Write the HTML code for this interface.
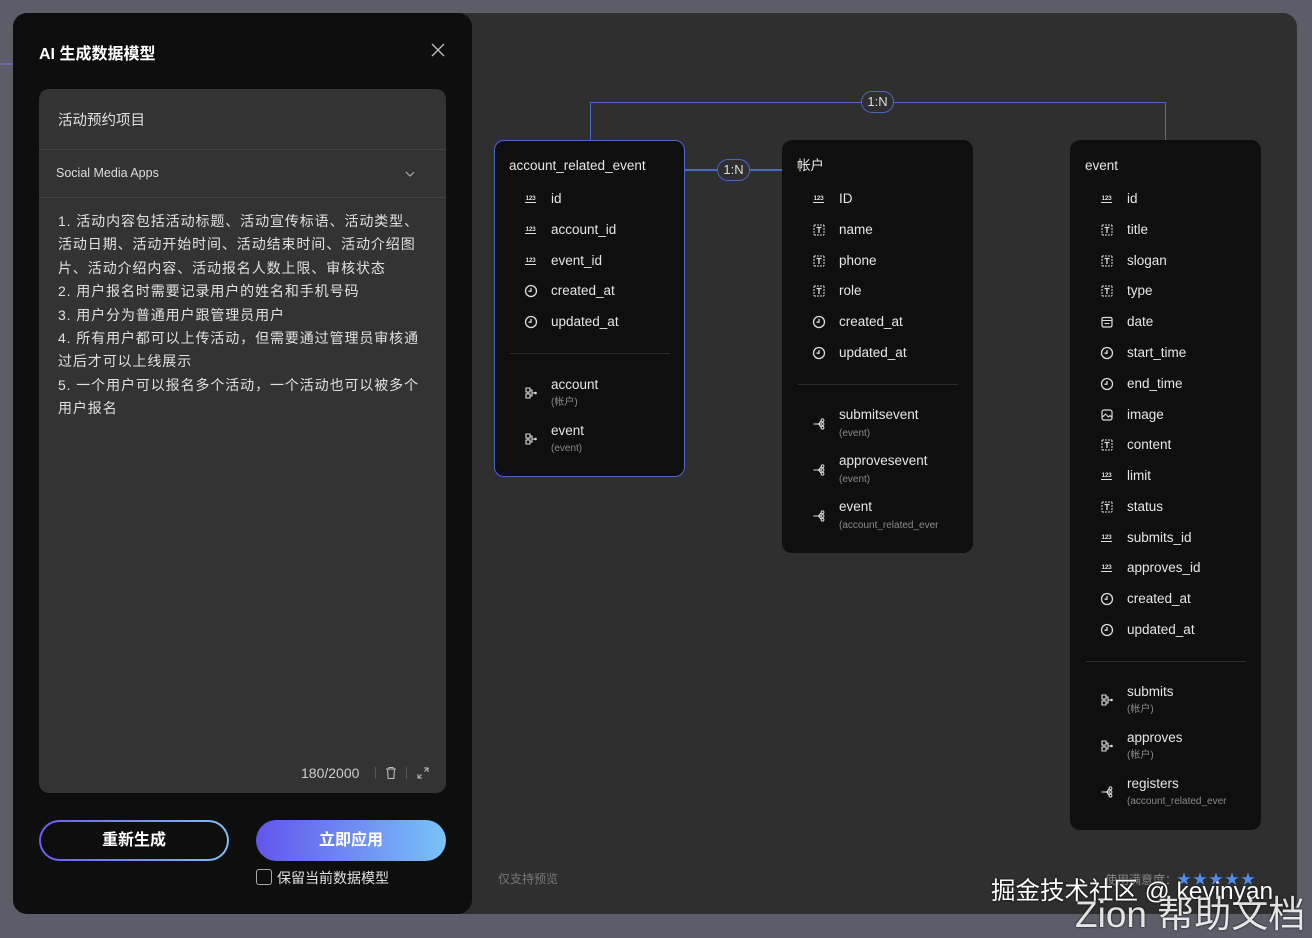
<!DOCTYPE html>
<html><head><meta charset="utf-8">
<style>
*{margin:0;padding:0;box-sizing:border-box}
body{width:1312px;height:930px;overflow:hidden;background:#5b5d68;font-family:"Liberation Sans","Noto Sans CJK SC",sans-serif;color:#e8e8e8;position:relative}
.abs{position:absolute}
.main{left:13px;top:13px;width:1284px;height:901px;background:#2f2f2f;border-radius:14px}
.left{left:13px;top:13px;width:459px;height:901px;background:#0e0e0e;border-radius:14px}
.card{position:absolute;background:#0f0f0f;border-radius:10px}
.card.sel{border:1.5px solid #4a68c8}
.r{position:absolute;font-size:13.5px;color:#e6e6e6;line-height:16px}
.s{position:absolute;font-size:10px;color:#8a8a8a;line-height:12px}
.ic{position:absolute;width:14px;height:14px}
.n{position:absolute;font-size:6.5px;font-weight:bold;color:#ddd;border-bottom:1.2px solid #ddd;line-height:7px;width:11px;text-align:center;letter-spacing:-0.3px}
.div{position:absolute;height:1px;background:#2c2c2c}
.lbl{position:absolute;height:22px;width:33px;border:1.5px solid #4a68c8;border-radius:11px;background:#2f2f2f;font-size:13px;color:#ddd;text-align:center;line-height:19px}
</style></head><body>
<div class="abs main"></div>
<div class="abs" style="left:0;top:63px;width:13px;height:2px;background:#6b6fa0"></div>

<div class="abs" style="left:590px;top:102px;width:576px;height:38px;border:1.5px solid #4a68c8;border-bottom:none"></div>
<div class="abs" style="left:685px;top:169px;width:97px;height:1.5px;background:#4a68c8"></div>
<div class="lbl" style="left:861px;top:91px">1:N</div>
<div class="lbl" style="left:717px;top:159px">1:N</div>

<!-- card 1 -->
<div class="card sel" style="left:494px;top:140px;width:191px;height:337px"></div>
<div class="r" style="left:509px;top:158px">account_related_event</div>
<span class="n" style="left:525px;top:195px">123</span><div class="r" style="left:551px;top:191px">id</div>
<span class="n" style="left:525px;top:226px">123</span><div class="r" style="left:551px;top:222px">account_id</div>
<span class="n" style="left:525px;top:257px">123</span><div class="r" style="left:551px;top:253px">event_id</div>
<svg class="ic" style="left:524px;top:284px" viewBox="0 0 14 14"><circle cx="7" cy="7" r="5.5" fill="none" stroke="#ddd" stroke-width="1.3"/><path d="M7 4v3.2H4.5" fill="none" stroke="#ddd" stroke-width="1.3"/></svg><div class="r" style="left:551px;top:283px">created_at</div>
<svg class="ic" style="left:524px;top:315px" viewBox="0 0 14 14"><circle cx="7" cy="7" r="5.5" fill="none" stroke="#ddd" stroke-width="1.3"/><path d="M7 4v3.2H4.5" fill="none" stroke="#ddd" stroke-width="1.3"/></svg><div class="r" style="left:551px;top:314px">updated_at</div>
<div class="div" style="left:510px;top:353px;width:160px"></div>
<svg class="ic" style="left:524px;top:386px" viewBox="0 0 14 14"><path d="M2 2h4v4H2zM2 8h4v4H2zM4 6v2M6 4h2v6H6M8 7h3" fill="none" stroke="#ddd" stroke-width="1.1"/><circle cx="11.5" cy="7" r="1.3" fill="#ddd"/></svg>
<div class="r" style="left:551px;top:377px">account</div><div class="s" style="left:551px;top:397px">(帐户)</div>
<svg class="ic" style="left:524px;top:432px" viewBox="0 0 14 14"><path d="M2 2h4v4H2zM2 8h4v4H2zM4 6v2M6 4h2v6H6M8 7h3" fill="none" stroke="#ddd" stroke-width="1.1"/><circle cx="11.5" cy="7" r="1.3" fill="#ddd"/></svg>
<div class="r" style="left:551px;top:423px">event</div><div class="s" style="left:551px;top:443px">(event)</div>

<!-- card 2 -->
<div class="card" style="left:782px;top:140px;width:191px;height:413px"></div>
<div class="r" style="left:797px;top:158px">帐户</div>
<span class="n" style="left:813px;top:195px">123</span><div class="r" style="left:839px;top:191px">ID</div>
<svg class="ic" style="left:812px;top:223px" viewBox="0 0 14 14"><path d="M2 2h10M2 12h10M2 2v10M12 2v10" fill="none" stroke="#ddd" stroke-width="1" stroke-dasharray="2 1"/><path d="M4.5 4.5h5M7 4.5v5.5" stroke="#ddd" stroke-width="1.3"/></svg><div class="r" style="left:839px;top:222px">name</div>
<svg class="ic" style="left:812px;top:254px" viewBox="0 0 14 14"><path d="M2 2h10M2 12h10M2 2v10M12 2v10" fill="none" stroke="#ddd" stroke-width="1" stroke-dasharray="2 1"/><path d="M4.5 4.5h5M7 4.5v5.5" stroke="#ddd" stroke-width="1.3"/></svg><div class="r" style="left:839px;top:253px">phone</div>
<svg class="ic" style="left:812px;top:284px" viewBox="0 0 14 14"><path d="M2 2h10M2 12h10M2 2v10M12 2v10" fill="none" stroke="#ddd" stroke-width="1" stroke-dasharray="2 1"/><path d="M4.5 4.5h5M7 4.5v5.5" stroke="#ddd" stroke-width="1.3"/></svg><div class="r" style="left:839px;top:283px">role</div>
<svg class="ic" style="left:812px;top:315px" viewBox="0 0 14 14"><circle cx="7" cy="7" r="5.5" fill="none" stroke="#ddd" stroke-width="1.3"/><path d="M7 4v3.2H4.5" fill="none" stroke="#ddd" stroke-width="1.3"/></svg><div class="r" style="left:839px;top:314px">created_at</div>
<svg class="ic" style="left:812px;top:346px" viewBox="0 0 14 14"><circle cx="7" cy="7" r="5.5" fill="none" stroke="#ddd" stroke-width="1.3"/><path d="M7 4v3.2H4.5" fill="none" stroke="#ddd" stroke-width="1.3"/></svg><div class="r" style="left:839px;top:345px">updated_at</div>
<div class="div" style="left:798px;top:384px;width:160px"></div>
<svg class="ic" style="left:812px;top:417px" viewBox="0 0 14 14"><path d="M1.5 7h5M6.5 7l3-3.5M6.5 7l3 3.5M6.5 7h3" fill="none" stroke="#ddd" stroke-width="1.1"/><circle cx="10.5" cy="3.3" r="1.4" fill="none" stroke="#ddd"/><circle cx="10.5" cy="10.7" r="1.4" fill="none" stroke="#ddd"/><circle cx="10.5" cy="7" r="1.4" fill="none" stroke="#ddd"/></svg>
<div class="r" style="left:839px;top:407px">submitsevent</div><div class="s" style="left:839px;top:428px">(event)</div>
<svg class="ic" style="left:812px;top:463px" viewBox="0 0 14 14"><path d="M1.5 7h5M6.5 7l3-3.5M6.5 7l3 3.5M6.5 7h3" fill="none" stroke="#ddd" stroke-width="1.1"/><circle cx="10.5" cy="3.3" r="1.4" fill="none" stroke="#ddd"/><circle cx="10.5" cy="10.7" r="1.4" fill="none" stroke="#ddd"/><circle cx="10.5" cy="7" r="1.4" fill="none" stroke="#ddd"/></svg>
<div class="r" style="left:839px;top:453px">approvesevent</div><div class="s" style="left:839px;top:474px">(event)</div>
<svg class="ic" style="left:812px;top:509px" viewBox="0 0 14 14"><path d="M1.5 7h5M6.5 7l3-3.5M6.5 7l3 3.5M6.5 7h3" fill="none" stroke="#ddd" stroke-width="1.1"/><circle cx="10.5" cy="3.3" r="1.4" fill="none" stroke="#ddd"/><circle cx="10.5" cy="10.7" r="1.4" fill="none" stroke="#ddd"/><circle cx="10.5" cy="7" r="1.4" fill="none" stroke="#ddd"/></svg>
<div class="r" style="left:839px;top:499px">event</div><div class="s" style="left:839px;top:520px">(account_related_ever</div>

<!-- card 3 -->
<div class="card" style="left:1070px;top:140px;width:191px;height:690px"></div>
<div class="r" style="left:1085px;top:158px">event</div>
<span class="n" style="left:1101px;top:195px">123</span><div class="r" style="left:1127px;top:191px">id</div>
<svg class="ic" style="left:1100px;top:223px" viewBox="0 0 14 14"><path d="M2 2h10M2 12h10M2 2v10M12 2v10" fill="none" stroke="#ddd" stroke-width="1" stroke-dasharray="2 1"/><path d="M4.5 4.5h5M7 4.5v5.5" stroke="#ddd" stroke-width="1.3"/></svg><div class="r" style="left:1127px;top:222px">title</div>
<svg class="ic" style="left:1100px;top:254px" viewBox="0 0 14 14"><path d="M2 2h10M2 12h10M2 2v10M12 2v10" fill="none" stroke="#ddd" stroke-width="1" stroke-dasharray="2 1"/><path d="M4.5 4.5h5M7 4.5v5.5" stroke="#ddd" stroke-width="1.3"/></svg><div class="r" style="left:1127px;top:253px">slogan</div>
<svg class="ic" style="left:1100px;top:284px" viewBox="0 0 14 14"><path d="M2 2h10M2 12h10M2 2v10M12 2v10" fill="none" stroke="#ddd" stroke-width="1" stroke-dasharray="2 1"/><path d="M4.5 4.5h5M7 4.5v5.5" stroke="#ddd" stroke-width="1.3"/></svg><div class="r" style="left:1127px;top:283px">type</div>
<svg class="ic" style="left:1100px;top:315px" viewBox="0 0 14 14"><rect x="2" y="2.5" width="10" height="9.5" rx="1.5" fill="none" stroke="#ddd" stroke-width="1.2"/><path d="M2 5.5h10M4.5 8.5h5" stroke="#ddd" stroke-width="1.1"/></svg><div class="r" style="left:1127px;top:314px">date</div>
<svg class="ic" style="left:1100px;top:346px" viewBox="0 0 14 14"><circle cx="7" cy="7" r="5.5" fill="none" stroke="#ddd" stroke-width="1.3"/><path d="M7 4v3.2H4.5" fill="none" stroke="#ddd" stroke-width="1.3"/></svg><div class="r" style="left:1127px;top:345px">start_time</div>
<svg class="ic" style="left:1100px;top:377px" viewBox="0 0 14 14"><circle cx="7" cy="7" r="5.5" fill="none" stroke="#ddd" stroke-width="1.3"/><path d="M7 4v3.2H4.5" fill="none" stroke="#ddd" stroke-width="1.3"/></svg><div class="r" style="left:1127px;top:376px">end_time</div>
<svg class="ic" style="left:1100px;top:408px" viewBox="0 0 14 14"><rect x="2" y="2" width="10" height="10" rx="2" fill="none" stroke="#ddd" stroke-width="1.2"/><path d="M2.5 9l3-3 3 3 1.5-1.5 2 2" fill="none" stroke="#ddd" stroke-width="1.1"/></svg><div class="r" style="left:1127px;top:407px">image</div>
<svg class="ic" style="left:1100px;top:438px" viewBox="0 0 14 14"><path d="M2 2h10M2 12h10M2 2v10M12 2v10" fill="none" stroke="#ddd" stroke-width="1" stroke-dasharray="2 1"/><path d="M4.5 4.5h5M7 4.5v5.5" stroke="#ddd" stroke-width="1.3"/></svg><div class="r" style="left:1127px;top:437px">content</div>
<span class="n" style="left:1101px;top:472px">123</span><div class="r" style="left:1127px;top:468px">limit</div>
<svg class="ic" style="left:1100px;top:500px" viewBox="0 0 14 14"><path d="M2 2h10M2 12h10M2 2v10M12 2v10" fill="none" stroke="#ddd" stroke-width="1" stroke-dasharray="2 1"/><path d="M4.5 4.5h5M7 4.5v5.5" stroke="#ddd" stroke-width="1.3"/></svg><div class="r" style="left:1127px;top:499px">status</div>
<span class="n" style="left:1101px;top:534px">123</span><div class="r" style="left:1127px;top:530px">submits_id</div>
<span class="n" style="left:1101px;top:564px">123</span><div class="r" style="left:1127px;top:560px">approves_id</div>
<svg class="ic" style="left:1100px;top:592px" viewBox="0 0 14 14"><circle cx="7" cy="7" r="5.5" fill="none" stroke="#ddd" stroke-width="1.3"/><path d="M7 4v3.2H4.5" fill="none" stroke="#ddd" stroke-width="1.3"/></svg><div class="r" style="left:1127px;top:591px">created_at</div>
<svg class="ic" style="left:1100px;top:623px" viewBox="0 0 14 14"><circle cx="7" cy="7" r="5.5" fill="none" stroke="#ddd" stroke-width="1.3"/><path d="M7 4v3.2H4.5" fill="none" stroke="#ddd" stroke-width="1.3"/></svg><div class="r" style="left:1127px;top:622px">updated_at</div>
<div class="div" style="left:1086px;top:661px;width:160px"></div>
<svg class="ic" style="left:1100px;top:693px" viewBox="0 0 14 14"><path d="M2 2h4v4H2zM2 8h4v4H2zM4 6v2M6 4h2v6H6M8 7h3" fill="none" stroke="#ddd" stroke-width="1.1"/><circle cx="11.5" cy="7" r="1.3" fill="#ddd"/></svg>
<div class="r" style="left:1127px;top:684px">submits</div><div class="s" style="left:1127px;top:704px">(帐户)</div>
<svg class="ic" style="left:1100px;top:739px" viewBox="0 0 14 14"><path d="M2 2h4v4H2zM2 8h4v4H2zM4 6v2M6 4h2v6H6M8 7h3" fill="none" stroke="#ddd" stroke-width="1.1"/><circle cx="11.5" cy="7" r="1.3" fill="#ddd"/></svg>
<div class="r" style="left:1127px;top:730px">approves</div><div class="s" style="left:1127px;top:750px">(帐户)</div>
<svg class="ic" style="left:1100px;top:785px" viewBox="0 0 14 14"><path d="M1.5 7h5M6.5 7l3-3.5M6.5 7l3 3.5M6.5 7h3" fill="none" stroke="#ddd" stroke-width="1.1"/><circle cx="10.5" cy="3.3" r="1.4" fill="none" stroke="#ddd"/><circle cx="10.5" cy="10.7" r="1.4" fill="none" stroke="#ddd"/><circle cx="10.5" cy="7" r="1.4" fill="none" stroke="#ddd"/></svg>
<div class="r" style="left:1127px;top:776px">registers</div><div class="s" style="left:1127px;top:796px">(account_related_ever</div>

<div class="abs" style="left:498px;top:870px;font-size:12px;color:#777">仅支持预览</div>
<div class="abs" style="left:1105px;top:869px;font-size:12px;color:#888">使用满意度：<span style="color:#4f8ef0;font-size:14px;letter-spacing:2px">★★★★★</span></div>

<!-- left panel -->
<div class="abs left"></div>
<div class="abs" style="left:39px;top:40px;font-size:16px;font-weight:bold;color:#fff">AI 生成数据模型</div>
<svg class="abs" style="left:431px;top:43px" width="14" height="14" viewBox="0 0 14 14"><path d="M1 1l12 12M13 1L1 13" stroke="#bbb" stroke-width="1.4"/></svg>
<div class="abs" style="left:39px;top:89px;width:407px;height:704px;background:#333;border-radius:10px"></div>
<div class="abs" style="left:58px;top:109px;font-size:14.5px;color:#e0e0e0">活动预约项目</div>
<div class="abs" style="left:39px;top:149px;width:407px;height:1px;background:#444"></div>
<div class="abs" style="left:56px;top:166px;font-size:12.5px;color:#ddd">Social Media Apps</div>
<svg class="abs" style="left:405px;top:170px" width="10" height="8" viewBox="0 0 10 8"><path d="M1 2l4 4 4-4" fill="none" stroke="#aaa" stroke-width="1.2"/></svg>
<div class="abs" style="left:39px;top:197px;width:407px;height:1px;background:#444"></div>
<div class="abs" style="left:58px;top:210px;width:366px;font-size:14px;letter-spacing:0.9px;line-height:23.4px;color:#e0e0e0">1. 活动内容包括活动标题、活动宣传标语、活动类型、活动日期、活动开始时间、活动结束时间、活动介绍图片、活动介绍内容、活动报名人数上限、审核状态<br>2. 用户报名时需要记录用户的姓名和手机号码<br>3. 用户分为普通用户跟管理员用户<br>4. 所有用户都可以上传活动，但需要通过管理员审核通过后才可以上线展示<br>5. 一个用户可以报名多个活动，一个活动也可以被多个用户报名</div>
<div class="abs" style="left:301px;top:765px;font-size:14px;color:#ccc">180/2000</div>
<div class="abs" style="left:375px;top:767px;width:1px;height:12px;background:#555"></div>
<svg class="abs" style="left:385px;top:766px" width="12" height="14" viewBox="0 0 12 14"><path d="M1 3h10M4 3V1.5h4V3M2.5 3l.7 9.5h5.6L9.5 3" fill="none" stroke="#bbb" stroke-width="1.1"/></svg>
<div class="abs" style="left:406px;top:767px;width:1px;height:12px;background:#555"></div>
<svg class="abs" style="left:416px;top:766px" width="14" height="14" viewBox="0 0 14 14"><path d="M8 2h4v4M12 2L8.5 5.5M6 12H2V8M2 12l3.5-3.5" fill="none" stroke="#bbb" stroke-width="1.1"/></svg>

<div class="abs" style="left:39px;top:820px;width:190px;height:41px;border-radius:21px;background:linear-gradient(90deg,#6a5cf0,#7fc0f5);padding:2px"><div style="width:100%;height:100%;border-radius:19px;background:#0e0e0e;text-align:center;line-height:37px;font-size:16px;font-weight:bold;color:#fff">重新生成</div></div>
<div class="abs" style="left:256px;top:820px;width:190px;height:41px;border-radius:21px;background:linear-gradient(90deg,#6355ee,#79c2f7);text-align:center;line-height:41px;font-size:16px;font-weight:bold;color:#fff">立即应用</div>
<div class="abs" style="left:256px;top:869px;width:16px;height:16px;border:1.5px solid #aaa;border-radius:3px"></div>
<div class="abs" style="left:277px;top:868px;font-size:14px;color:#e0e0e0">保留当前数据模型</div>

<div class="abs" style="left:991px;top:872px;font-size:24.5px;color:#fff;text-shadow:0 0 2px #000;white-space:nowrap">掘金技术社区 @ kevinyan</div>
<div class="abs" style="left:1075px;top:884px;font-size:37px;color:#fff;opacity:.85;text-shadow:0 0 2px #000;white-space:nowrap">Zion 帮助文档</div>
</body></html>
